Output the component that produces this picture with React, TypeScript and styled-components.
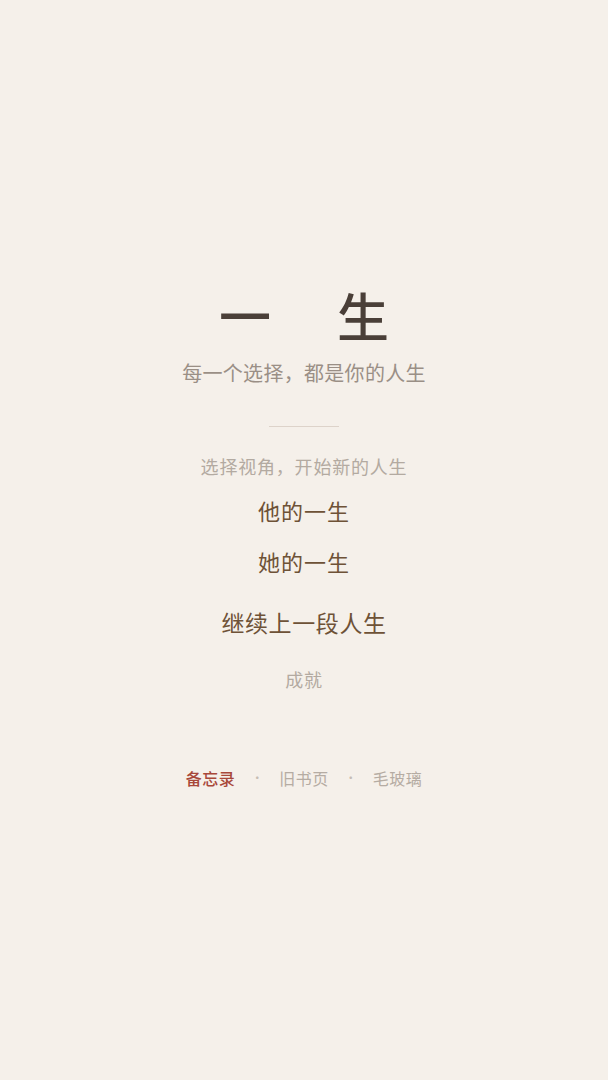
import React from "react";
import styled, { createGlobalStyle } from "styled-components";

const Global = createGlobalStyle`
  html, body { margin: 0; padding: 0; background: #f5f0ea; }
  body { font-family: "Noto Sans CJK SC", "Noto Sans", sans-serif; }
`;

const Page = styled.div`
  width: 608px;
  height: 1080px;
  display: flex;
  flex-direction: column;
  align-items: center;
  background: #f5f0ea;
`;

const Hero = styled.header`
  margin-top: 280px;
  display: flex;
  flex-direction: column;
  align-items: center;
`;

const Title = styled.h1`
  margin: 0;
  display: flex;
  gap: 66px;
  font-size: 52px;
  line-height: 70px;
  font-weight: 500;
  color: #4a3f38;
`;

const Subtitle = styled.p`
  margin: 8px 0 0;
  font-size: 20px;
  line-height: 30px;
  letter-spacing: 0.3px;
  color: #9a8f86;
`;

const Divider = styled.hr`
  width: 70px;
  height: 1px;
  border: none;
  background: #ddd3ca;
  margin: 38px 0 0;
`;

const Menu = styled.nav`
  margin-top: 26px;
  display: flex;
  flex-direction: column;
  align-items: center;
`;

const Hint = styled.p<{ $top?: number }>`
  margin: ${(p) => p.$top ?? 0}px 0 0;
  font-size: 18px;
  line-height: 26px;
  letter-spacing: 0.8px;
  color: #b3aaa1;
`;

const Option = styled.button<{ $top: number; $wide?: boolean }>`
  margin-top: ${(p) => p.$top}px;
  padding: 0;
  border: none;
  background: none;
  font-family: inherit;
  font-size: ${(p) => (p.$wide ? 23 : 22)}px;
  line-height: 30px;
  letter-spacing: ${(p) => (p.$wide ? 0.6 : 1)}px;
  color: #6e5237;
  cursor: pointer;
`;

const Footer = styled.footer`
  margin-top: 74px;
  display: flex;
  align-items: center;
  gap: 16px;
  font-size: 16px;
  line-height: 24px;
  letter-spacing: 0.5px;
`;

const Link = styled.span<{ $active?: boolean }>`
  color: ${(p) => (p.$active ? "#a8483a" : "#b5aca3")};
  font-weight: ${(p) => (p.$active ? 500 : 400)};
`;

const Dot = styled.span`
  color: #c6bdb4;
  font-size: 12px;
  letter-spacing: 0;
`;

export default function App() {
  return (
    <Page>
      <Global />
      <Hero>
        <Title>
          <span>一</span>
          <span>生</span>
        </Title>
        <Subtitle>每一个选择，都是你的人生</Subtitle>
      </Hero>
      <Divider />
      <Menu>
        <Hint>选择视角，开始新的人生</Hint>
        <Option $top={16}>他的一生</Option>
        <Option $top={21}>她的一生</Option>
        <Option $top={31} $wide>继续上一段人生</Option>
        <Hint $top={29}>成就</Hint>
      </Menu>
      <Footer>
        <Link $active>备忘录</Link>
        <Dot>·</Dot>
        <Link>旧书页</Link>
        <Dot>·</Dot>
        <Link>毛玻璃</Link>
      </Footer>
    </Page>
  );
}
